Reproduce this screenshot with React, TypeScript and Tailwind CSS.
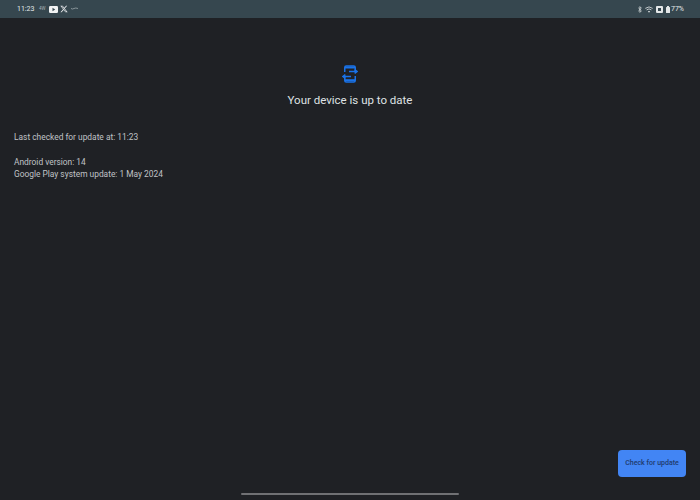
import React from 'react';

const YoutubeIcon = () => (
  <svg width="9" height="7" viewBox="0 0 9 7">
    <rect width="9" height="7" rx="1.2" fill="#f1f3f4" />
    <path d="M3.5 1.8 L6.2 3.5 L3.5 5.2 Z" fill="#36474f" />
  </svg>
);

const XIcon = () => (
  <svg width="8" height="8" viewBox="0 0 24 24" fill="#e8eaed">
    <path d="M18.2 2h3.4l-7.4 8.5L23 22h-6.8l-5.3-7-6.1 7H1.4l7.9-9.1L1 2h7l4.8 6.4L18.2 2zm-1.2 18h1.9L7 3.9H5L17 20z" />
  </svg>
);

const StatusBar = () => (
  <div className="h-[18px] shrink-0 bg-[#36474f] flex items-center justify-between pl-[17px] pr-[16px] text-[#e3e7e8] text-[7px] font-['Roboto',sans-serif]">
    <div className="flex items-center">
      <span className="w-[22px]">11:23</span>
      <span className="w-[10px] text-[4.5px] text-[#a9b4b8]">4W</span>
      <YoutubeIcon />
      <span className="w-[2px]" />
      <XIcon />
      <svg className="ml-[3px]" width="7" height="4" viewBox="0 0 7 4" fill="none" stroke="#aab4b8" strokeWidth="0.7">
        <path d="M0 1.5 Q1.5 2.5 3 1.5 T7 1.5" />
      </svg>
    </div>
    <div className="flex items-center gap-[3px]">
      <svg width="4" height="7" viewBox="0 0 4 7" fill="none" stroke="#e3e7e8" strokeWidth="0.7">
        <path d="M0.3 1.8 L3.4 4.8 L1.9 6.4 V0.6 L3.4 2.2 L0.3 5.2" />
      </svg>
      <svg width="8" height="7" viewBox="0 0 8 7" fill="none" stroke="#e3e7e8" strokeWidth="0.8">
        <path d="M0.3 2.4 Q4 -0.6 7.7 2.4" />
        <path d="M1.6 3.9 Q4 1.9 6.4 3.9" />
        <path d="M4 6.8 L2.9 5.3 Q4 4.5 5.1 5.3 Z" fill="#e3e7e8" stroke="none" />
      </svg>
      <svg width="7" height="7" viewBox="0 0 7 7">
        <rect width="7" height="7" rx="1" fill="#e3e7e8" />
        <rect x="2" y="2" width="3" height="3" fill="#36474f" />
      </svg>
      <div className="flex items-center gap-[1px]">
        <svg width="4" height="7" viewBox="0 0 4 7">
          <rect x="1" y="0" width="2" height="1" fill="#e3e7e8" />
          <rect x="0" y="1" width="4" height="6" rx="0.5" fill="#e3e7e8" />
        </svg>
        <span>77%</span>
      </div>
    </div>
  </div>
);

const UpdateIcon = () => (
  <svg width="16" height="18" viewBox="0 0 16 18" fill="none" stroke="#1a73e8" strokeWidth="1.5">
    <path d="M2.75 7 V2.5 Q2.75 1 4.25 1 H11.75 Q13.25 1 13.25 2.5 V7" />
    <path d="M3 2.5 H13" strokeWidth="2" />
    <path d="M13.25 11 V15.5 Q13.25 17 11.75 17 H4.25 Q2.75 17 2.75 15.5 V11" />
    <path d="M3 15.2 H13" strokeWidth="2" />
    <path d="M7 6.5 H13.5" />
    <path d="M12.6 4.6 L15 6.5 L12.6 8.4" />
    <path d="M9 11.5 H2.5" />
    <path d="M3.4 9.6 L1 11.5 L3.4 13.4" />
  </svg>
);

export default function App() {
  return (
    <div className="w-[700px] h-[500px] flex flex-col bg-[#1f2125] overflow-hidden font-['Roboto',sans-serif]">
      <StatusBar />
      <div className="flex-1 flex flex-col">
        <div className="flex flex-col items-center pt-[47px]">
          <UpdateIcon />
          <h1 className="mt-[9px] text-[11.5px] leading-[16px] font-normal text-[#dfe1e4]">Your device is up to date</h1>
        </div>
        <div className="mt-[23px] pl-[14px] text-[8.4px] leading-[12px] text-[#c0c3c7]">
          <p>Last checked for update at: 11:23</p>
          <p className="mt-[12.5px]">Android version: 14</p>
          <p>Google Play system update: 1 May 2024</p>
        </div>
        <div className="mt-auto flex justify-end pr-[14px]">
          <button className="w-[68px] h-[27px] rounded-[4px] bg-[#4285f4] text-[#1f3a6e] text-[7px] font-medium flex items-center justify-center">
            Check for update
          </button>
        </div>
      </div>
      <div className="h-[23px] shrink-0 flex justify-center pt-[16px]">
        <div className="w-[218px] h-[2px] rounded-full bg-[#707174]" />
      </div>
    </div>
  );
}
